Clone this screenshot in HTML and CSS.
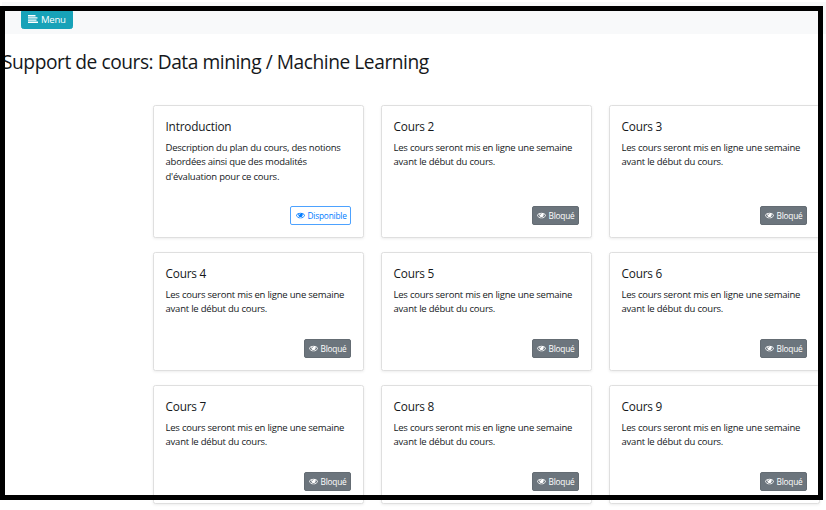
FILE: index.html
```html
<!DOCTYPE html>
<html lang="fr">
<head>
<meta charset="utf-8">
<title>Support de cours</title>
<link rel="stylesheet" href="styles.css">
</head>
<body>
<svg width="0" height="0" class="defs">
  <symbol id="eye" viewBox="0 0 1792 1408">
    <path fill="currentColor" d="M1664 704q-152-236-381-353 61 104 61 225 0 185-131.500 316.500t-316.500 131.500-316.500-131.500-131.500-316.500q0-121 61-225-229 117-381 353 133 205 333.500 326.500t434.500 121.500 434.500-121.500 333.500-326.500zm-720-384q0-20-14-34t-34-14q-125 0-214.500 89.500t-89.500 214.500q0 20 14 34t34 14 34-14 14-34q0-86 61-147t147-61q20 0 34-14t14-34zm848 384q0 34-20 69-140 230-376.500 368.500t-499.500 138.500-499.500-139-376.500-368q-20-35-20-69t20-69q140-229 376.500-368t499.500-139 499.500 139 376.500 368q20 35 20 69z"/>
  </symbol>
</svg>
<div class="page">
  <nav class="navbar">
    <button class="btn-menu"><svg class="bars" viewBox="0 0 10 8"><path fill="currentColor" d="M0 0h7.500v1.400H0zM0 2.200h9.500v1.400H0zM0 4.400h8.500v1.400H0zM0 6.600h10v1.400H0z"/></svg><span>Menu</span></button>
  </nav>
  <h1 class="title">Support de cours: Data mining / Machine Learning</h1>
  <main class="cards">
    <article class="card"><h2>Introduction</h2><p>Description du plan du cours, des notions<br>abordées ainsi que des modalités<br>d'évaluation pour ce cours.</p><button class="btn open"><svg><use href="#eye"/></svg><span>Disponible</span></button></article>
    <article class="card"><h2>Cours 2</h2><p>Les cours seront mis en ligne une semaine<br>avant le début du cours.</p><button class="btn"><svg><use href="#eye"/></svg><span>Bloqué</span></button></article>
    <article class="card"><h2>Cours 3</h2><p>Les cours seront mis en ligne une semaine<br>avant le début du cours.</p><button class="btn"><svg><use href="#eye"/></svg><span>Bloqué</span></button></article>
    <article class="card"><h2>Cours 4</h2><p>Les cours seront mis en ligne une semaine<br>avant le début du cours.</p><button class="btn"><svg><use href="#eye"/></svg><span>Bloqué</span></button></article>
    <article class="card"><h2>Cours 5</h2><p>Les cours seront mis en ligne une semaine<br>avant le début du cours.</p><button class="btn"><svg><use href="#eye"/></svg><span>Bloqué</span></button></article>
    <article class="card"><h2>Cours 6</h2><p>Les cours seront mis en ligne une semaine<br>avant le début du cours.</p><button class="btn"><svg><use href="#eye"/></svg><span>Bloqué</span></button></article>
    <article class="card"><h2>Cours 7</h2><p>Les cours seront mis en ligne une semaine<br>avant le début du cours.</p><button class="btn"><svg><use href="#eye"/></svg><span>Bloqué</span></button></article>
    <article class="card"><h2>Cours 8</h2><p>Les cours seront mis en ligne une semaine<br>avant le début du cours.</p><button class="btn"><svg><use href="#eye"/></svg><span>Bloqué</span></button></article>
    <article class="card"><h2>Cours 9</h2><p>Les cours seront mis en ligne une semaine<br>avant le début du cours.</p><button class="btn"><svg><use href="#eye"/></svg><span>Bloqué</span></button></article>
  </main>
</div>
<div class="frame"></div>
</body>
</html>
```

FILE: styles.css
```css
* { box-sizing: border-box; }
body {
  margin: 0;
  height: 510px;
  overflow: hidden;
  position: relative;
  background: #fff;
  color: #15181b;
  font-family: "Open Sans", "Noto Sans", sans-serif;
}
.defs { position: absolute; }
.page { padding: 2px 0 0 2px; }
.navbar {
  height: 32px;
  padding: 7px 0 0 19px;
  background: #f8f9fa;
}
button { font-family: inherit; margin: 0; }
.btn-menu {
  display: flex;
  align-items: center;
  gap: 3px;
  width: 52px;
  height: 20px;
  padding: 0 0 0 6px;
  border: 1px solid #17a2b8;
  border-radius: 2.500px;
  background: #17a2b8;
  color: #fff;
  font-size: 9.600px;
  letter-spacing: -0.300px;
}
.bars { width: 10px; height: 8px; }
.title {
  margin: 14px 0 0;
  font-size: 19.200px;
  font-weight: 400;
  line-height: 28px;
  letter-spacing: -0.460px;
  white-space: nowrap;
}
.cards {
  display: grid;
  grid-template-columns: repeat(3, 210.500px);
  grid-template-rows: 133px 119px 119px;
  column-gap: 17.500px;
  row-gap: 14px;
  width: 667px;
  margin: 29px 0 0 151px;
}
.card {
  display: flex;
  flex-direction: column;
  padding: 12px 11.500px 12px 11.500px;
  border: 1px solid #dfdfdf;
  border-radius: 2.500px;
  background: #fff;
  box-shadow: 0 1px 3px rgba(0, 0, 0, 0.075);
}
.card h2 {
  margin: 0 0 6.700px;
  font-size: 11.800px;
  font-weight: 400;
  line-height: 16px;
  letter-spacing: -0.200px;
}
.card p {
  margin: 0;
  font-size: 9.500px;
  line-height: 14.400px;
  letter-spacing: -0.220px;
  white-space: nowrap;
}
.btn {
  display: flex;
  align-items: center;
  gap: 2.500px;
  align-self: flex-end;
  width: 47px;
  height: 19px;
  margin-top: auto;
  padding: 0 0 0 4px;
  border: 1px solid #646c73;
  border-radius: 2px;
  background: #6c757d;
  color: #fff;
  font-size: 8.300px;
  letter-spacing: -0.200px;
}
.btn svg { flex: none; width: 9px; height: 7px; }
.btn.open {
  width: 61px;
  padding-left: 5px;
  background: #fff;
  border-color: #4da2ff;
  color: #007bff;
}
.frame {
  position: absolute;
  left: 0;
  top: 6px;
  width: 823px;
  height: 494px;
  border: 5px solid #000;
  pointer-events: none;
}
```
